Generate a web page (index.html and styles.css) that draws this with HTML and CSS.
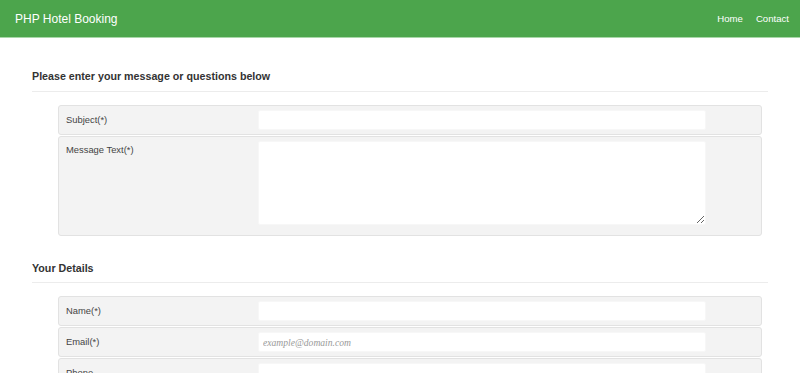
FILE: index.html
```html
<!DOCTYPE html>
<html lang="en">
<head>
<meta charset="utf-8">
<title>PHP Hotel Booking - Contact</title>
<link rel="stylesheet" href="styles.css">
</head>
<body>
<header class="topbar">
  <a class="brand" href="#">PHP Hotel Booking</a>
  <nav class="nav">
    <a href="#">Home</a>
    <a href="#">Contact</a>
  </nav>
</header>
<main class="page">
  <h2 class="section-title first">Please enter your message or questions below</h2>
  <div class="row">
    <label class="lbl">Subject(*)</label>
    <input class="field" type="text">
  </div>
  <div class="row tall">
    <label class="lbl">Message Text(*)</label>
    <textarea class="field area"></textarea>
  </div>

  <h2 class="section-title">Your Details</h2>
  <div class="row">
    <label class="lbl">Name(*)</label>
    <input class="field" type="text">
  </div>
  <div class="row">
    <label class="lbl">Email(*)</label>
    <input class="field" type="text" placeholder="example@domain.com">
  </div>
  <div class="row">
    <label class="lbl">Phone</label>
    <input class="field" type="text">
  </div>
  <div class="row">
    <label class="lbl">Address</label>
    <input class="field" type="text">
  </div>
</main>
</body>
</html>
```
FILE: styles.css
```css
* { box-sizing: border-box; }
html, body { margin: 0; padding: 0; background: #fff; }
body {
  font-family: "Liberation Sans", Arial, sans-serif;
  color: #333;
}
.topbar {
  height: 38px;
  background: #4ca54c;
  border-bottom: 1px solid #a8d7a8;
  display: flex;
  align-items: center;
  justify-content: space-between;
  padding: 0 11px 0 15px;
}
.brand {
  color: #fff;
  text-decoration: none;
  font-size: 12px;
  line-height: 14px;
}
.nav { display: flex; gap: 13px; }
.nav a {
  color: #fff;
  text-decoration: none;
  font-size: 9.6px;
  line-height: 12px;
}
.page { padding: 0 32px; }
.section-title {
  margin: 25px 0 13px;
  font-size: 10.7px;
  line-height: 14px;
  font-weight: bold;
  color: #333;
  padding-bottom: 7px;
  border-bottom: 1px solid #ececec;
}
.section-title.first { margin-top: 31px; padding-bottom: 8px; }
.row {
  margin: 0 6px 1px 26px;
  background: #f3f3f3;
  border: 1px solid #e2e2e2;
  border-radius: 3px;
  padding: 4px 55px 4px 7px;
  display: grid;
  grid-template-columns: 192px 448px;
  align-items: center;
}
.row.tall { align-items: start; padding-bottom: 10px; }
.lbl {
  font-size: 9.4px;
  line-height: 14px;
  color: #444;
}
.row.tall .lbl { margin-top: 2px; }
.field {
  display: block;
  width: 448px;
  height: 20px;
  margin: 0;
  border: 1px solid #f7f7f7;
  border-radius: 2px;
  background: #fff;
  padding: 2px 4px;
  font-family: "Liberation Serif", serif;
  font-size: 9.6px;
  color: #333;
  outline: none;
}
.field::placeholder { color: #999; font-style: italic; }
.area { height: 84px; resize: vertical; }
```
